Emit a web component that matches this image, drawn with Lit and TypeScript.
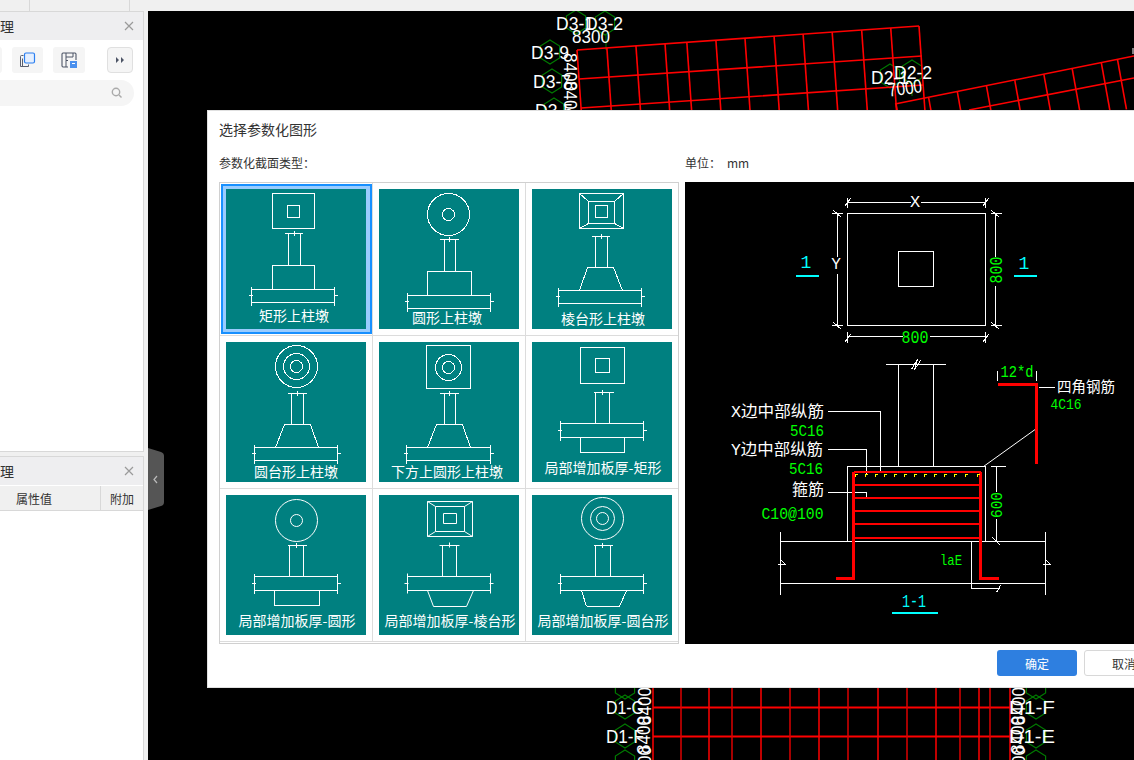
import { LitElement, html, svg, css } from "lit";
import { customElement } from "lit/decorators.js";

const R = (a: number, b: number, c: number, d: number) => `M${a} ${b}H${c}V${d}H${a}Z`;
const L = (...p: number[]) => {
  let s = "";
  for (let i = 0; i < p.length; i += 2) s += `${i ? "L" : "M"}${p[i]} ${p[i + 1]}`;
  return s;
};
const col = (a: number, b: number, y1: number, y2: number, l: number, r: number) =>
  L(l, y1, r, y1) + L(a, y1, a, y2) + L(b, y1, b, y2) + L((a + b) >> 1, y1 - 3, (a + b) >> 1, y1 + 2);
const slab = (a: number, b: number, y1: number, y2: number) => {
  const m = (y1 + y2) >> 1;
  return (
    L(a, y1, b, y1) + L(a, y2, b, y2) + L(a, y1 - 3, a, y2 + 3) + L(b, y1 - 3, b, y2 + 3) +
    L(a - 3, m, a + 1, m) + L(b - 1, m, b + 3, m)
  );
};
const trap = (a: number, b: number, y1: number, c: number, d: number, y2: number) =>
  L(a, y1, b, y1) + L(a, y1, c, y2) + L(b, y1, d, y2) + L(c, y2, d, y2);
const diag = (o: number[], m: number[]) =>
  L(o[0], o[1], m[0], m[1]) + L(o[2], o[1], m[2], m[1]) + L(o[0], o[3], m[0], m[3]) + L(o[2], o[3], m[2], m[3]);

interface Tile {
  name: string; d: string; c: number[][]; tx: number; ty: number; smooth?: boolean; selected?: boolean;
}
const TILES: Tile[] = [
  { name: "矩形上柱墩", selected: true, tx: 68, ty: 127, c: [],
    d: R(46, 4, 88, 39) + R(61, 16, 73, 28) + col(62, 74, 44, 76, 58, 76) + R(46, 76, 88, 100) + slab(25, 108, 100, 113) },
  { name: "圆形上柱墩", tx: 68, ty: 129, c: [[69, 25, 21], [69, 25, 6]],
    d: col(65, 76, 50, 82, 60, 79) + R(48, 82, 92, 106) + slab(28, 111, 106, 119) },
  { name: "棱台形上柱墩", tx: 71, ty: 130, c: [],
    d: R(47, 4, 91, 39) + R(56, 12, 82, 34) + R(63, 16, 75, 28) + diag([47, 4, 91, 39], [56, 12, 82, 34]) +
      col(63, 75, 47, 78, 59, 77) + trap(55, 81, 78, 47, 90, 101) + slab(26, 109, 101, 114) },
  { name: "圆台形上柱墩", tx: 70, ty: 130, c: [[70, 24, 21], [70, 24, 13], [70, 24, 6]],
    d: col(65, 77, 51, 82, 61, 80) + trap(58, 84, 82, 49, 92, 105) + slab(28, 111, 105, 118) },
  { name: "下方上圆形上柱墩", tx: 68, ty: 130, c: [[69, 25, 13], [69, 25, 6]],
    d: R(47, 3, 91, 46) + col(65, 76, 51, 82, 60, 79) + trap(57, 83, 82, 48, 91, 105) + slab(27, 111, 105, 118) },
  { name: "局部增加板厚-矩形", tx: 71, ty: 126, c: [],
    d: R(48, 5, 92, 41) + R(63, 16, 77, 30) + col(63, 77, 50, 81, 61, 81) + slab(28, 111, 81, 95) + R(48, 95, 92, 110) },
  { name: "局部增加板厚-圆形", tx: 71, ty: 126, smooth: true, c: [[70, 25, 21], [70, 25, 6]],
    d: col(63, 77, 50, 81, 61, 80) + slab(28, 111, 81, 95) + R(48, 95, 93, 110) },
  { name: "局部增加板厚-棱台形", tx: 71, ty: 126, smooth: true, c: [],
    d: R(48, 6, 93, 41) + R(56, 11, 85, 36) + R(64, 18, 77, 28) + diag([48, 6, 93, 41], [56, 11, 85, 36]) +
      col(63, 77, 50, 81, 60, 80) + slab(28, 111, 81, 95) + trap(48, 94, 95, 54, 87, 111) },
  { name: "局部增加板厚-圆台形", tx: 71, ty: 126, smooth: true, c: [[70, 23, 21], [70, 23, 12], [70, 23, 6]],
    d: col(63, 78, 50, 81, 61, 80) + slab(28, 111, 81, 95) + trap(49, 94, 95, 54, 87, 111) },
];

const tileSvg = (t: Tile) => html`<svg class="tile" width="140" height="140" viewBox="0 0 140 140">
  <g transform="translate(.5 .5)" fill="none" stroke="#fff" stroke-width="1">
    <path d=${t.d} shape-rendering=${t.smooth && t.name.includes("棱") ? "auto" : "crispEdges"}></path>
    ${t.c.map((c) => svg`<circle cx=${c[0]} cy=${c[1]} r=${c[2]} shape-rendering=${t.smooth ? "auto" : "crispEdges"}></circle>`)}
  </g>
  <text x=${t.tx} y=${t.ty + 5} text-anchor="middle" fill="#fff" font-size="14">${t.name}</text>
</svg>`;

/* CAD text: x,y is the centre of the run */
const cad = (x: number, y: number, s: string, fill: string, size: number, len?: number, rot = 0) => svg`<text
  transform="translate(${x} ${y}) rotate(${rot})" text-anchor="middle" dominant-baseline="central" fill=${fill}
  font-size=${size} textLength=${len ?? ""} lengthAdjust="spacingAndGlyphs">${s}</text>`;

const G = "#00ff00", W = "#ffffff", C = "#00ffff";
const tick = (x: number, y: number) => L(x - 3, y + 4, x + 3, y - 4);
const rebarY = [471, 484, 497, 510, 523, 537];
const dots = [855, 865, 875, 884, 894, 904, 914, 924, 934, 944, 954, 965, 977];

const whitePath =
  L(847, 197, 847, 207) + L(985, 197, 985, 207) + L(847, 202, 910, 202) + L(920, 202, 985, 202) + tick(847, 202) + tick(985, 202) +
  R(847, 213, 985, 325) + R(898, 251, 933, 286) +
  L(831, 213, 842, 213) + L(831, 325, 842, 325) + L(837, 213, 837, 256) + L(837, 273, 837, 325) +
  "M833 210L841 217M833 322L841 329" +
  L(990, 213, 1001, 213) + L(990, 325, 1001, 325) + L(995, 213, 995, 256) + L(995, 285, 995, 325) +
  "M991 210L999 217M991 322L999 329" +
  L(847, 331, 847, 342) + L(985, 331, 985, 342) + L(847, 336, 902, 336) + L(929, 336, 985, 336) + tick(847, 338) + tick(985, 338) +
  /* section */
  L(885, 364, 945, 364) + L(898, 364, 898, 466) + L(933, 364, 933, 466) +
  "M911 369L917 359L914 369L920 360" +
  R(847, 466, 985, 541) + L(780, 541, 1045, 541) + L(780, 583, 1045, 583) + L(780, 531, 780, 594) + L(1045, 531, 1045, 594) +
  "M777 564H785L781 560M1042 564H1050L1046 560" +
  L(827, 411, 880, 411) + L(880, 411, 880, 472) + L(827, 449, 866, 449) + L(866, 449, 866, 473) +
  L(827, 492, 866, 492) + L(866, 492, 866, 497) + L(1038, 387, 1054, 387) +
  L(990, 466, 1005, 466) + L(996, 466, 996, 491) + L(996, 518, 996, 541) + "M992 537L1000 545" +
  L(971, 540, 971, 588) + L(971, 588, 999, 588) + "M996 592L1000 585";

const Drawing = () => html`<svg class="draw" width="479" height="462" viewBox="685 182 479 462">
  <rect x="685" y="182" width="479" height="462" fill="#000"></rect>
  <g transform="translate(.5 .5)" fill="none">
    <path d=${whitePath} stroke="#fff" shape-rendering="crispEdges"></path>
    <path d="M983 466L1036 428" stroke="#fff"></path>
    <path d="M997 370V380M1036 370V380" stroke="#fff" shape-rendering="crispEdges"></path>
    <path d="M795 275H818M1013 275H1036M891 612H937" stroke=${C} stroke-width="2" shape-rendering="crispEdges"></path>
    <g stroke="#ff0000" stroke-width="2" shape-rendering="crispEdges">
      ${rebarY.map((y) => svg`<path d="M853 ${y}H980"></path>`)}
    </g>
    <path d="M853 471V578H835M980 471V578H998M997 384H1036V463" stroke="#ff0000" stroke-width="2.5" shape-rendering="crispEdges"></path>
    <g stroke="#ffff00" shape-rendering="crispEdges">
      ${dots.map((x) => svg`<path d="M${x - 1} 474H${x + 2}M${x} 473V476"></path>`)}
    </g>
  </g>
  <g class="cad">
    ${cad(915, 202, "X", W, 17)} ${cad(836, 265, "Y", W, 16)}
    ${cad(915, 338, "800", G, 19, 27)} ${cad(997, 270, "800", G, 19, 27, -90)}
    ${cad(806, 263, "1", C, 18)} ${cad(1024, 264, "1", C, 18)}
    ${cad(777.5, 413, "X边中部纵筋", W, 16, 93)} ${cad(807, 431, "5C16", G, 17, 34)}
    ${cad(777, 451, "Y边中部纵筋", W, 16, 92)} ${cad(806, 469, "5C16", G, 17, 34)}
    ${cad(808, 491, "箍筋", W, 16, 32)} ${cad(792.5, 514, "C10@100", G, 17, 62)}
    ${cad(1086, 388, "四角钢筋", W, 15, 58)} ${cad(1066, 405, "4C16", G, 15, 31)}
    ${cad(1017, 373, "12*d", G, 16, 33)} ${cad(997, 505, "600", G, 17, 26, -90)}
    ${cad(951, 561, "laE", G, 15, 22)} ${cad(914, 602, "1-1", C, 18, 24)}
  </g>
</svg>`;

/* background plan */
const lerp = (a: number, b: number, t: number) => a + (b - a) * t;
const gridCols = [0, 74, 146, 218, 272, 344, 416, 488, 560, 632, 705, 777, 847].map((v) => v / 847);
const rightCols = [660, 731, 803, 873, 945, 1015, 1087, 1127];
const botX = [653, 681, 709, 732, 761, 790, 819, 848, 878, 907, 936, 960, 979, 990, 1010];
const hex = (x: number, y: number, r = 12) => {
  const pts = [0, 60, 120, 180, 240, 300].map((a) => {
    const t = ((a - 90) * Math.PI) / 180;
    return `${(x + r * 0.92 * Math.cos(t)).toFixed(1)},${(y + r * Math.sin(t)).toFixed(1)}`;
  });
  return svg`<polygon points=${pts.join(" ")} fill="none" stroke="#007a00" stroke-width="1.2"></polygon>`;
};
const label = (x: number, y: number, s: string, len: number, rot = 0) => svg`<text transform="translate(${x} ${y}) rotate(${rot})"
  text-anchor="middle" dominant-baseline="central" fill="#fff" font-size="19" textLength=${len} lengthAdjust="spacingAndGlyphs">${s}</text>`;

const Plan = () => html`<svg class="plan" width="986" height="749" viewBox="148 11 986 749">
  ${[[576, 22], [605, 23], [550, 52], [552, 81], [554, 110], [890, 76], [912, 72]].map((p) => hex(p[0], p[1]))}
  ${[687, 707, 736, 762].flatMap((y) => [hex(625, y), hex(1036, y)])}
  <path d="M606 35V50M912 84V96" stroke="#007a00"></path>
  <path d="M1133 48V54" stroke="#fff"></path>
  <g stroke="#ff0000" stroke-width="1.6" fill="none">
    <path d="M577 50L919 26M579 79L922 56M581 108L923 85"></path>
    ${gridCols.map((t) => {
      const x = lerp(577, 919, t), y = lerp(50, 26, t);
      return svg`<path d="M${x} ${y}L${x + 7} ${y + 100}"></path>`;
    })}
    <path d="M895 104L1134 56M969 110L1134 78M896 104L900 125"></path>
    ${rightCols.map((v) => {
      const x = 500 + (v + 400) / 2.473, y = lerp(94, 56, (x - 947) / 187);
      return svg`<path d="M${x} ${y}L${x + 9} ${y + 50}"></path>`;
    })}
  </g>
  <g stroke="#ff0000" fill="none">
    <path d="M653 707.5H1010M653 736.5H1010" stroke-width="2"></path>
    ${botX.map((x, i) => svg`<path d="M${x} 688V760" stroke-width="1.5" stroke=${i % 2 ? "#dd0000" : "#ff0000"}></path>`)}
  </g>
  <g class="plan-text">
    ${label(575, 23, "D3-1", 38)} ${label(604, 23, "D3-2", 38)} ${label(591, 36, "8300", 38)}
    ${label(550, 52, "D3-9", 38)} ${label(552, 81, "D3-7", 38)} ${label(554, 110, "D3-5", 38)}
    ${label(570, 72, "8400", 38, 90)} ${label(570, 100, "8400", 38, 90)}
    ${label(890, 77, "D2-1", 38)} ${label(913, 72, "D2-2", 38)} ${label(905, 88, "7000", 34, -8)}
    ${label(625, 707, "D1-G", 38)} ${label(625, 736, "D1-F", 38)}
    ${label(1032, 707, "D1-F", 46)} ${label(1032, 736, "D1-E", 46)}
    ${label(644, 706, "8400", 38, -90)} ${label(643, 735, "8400", 38, -90)} ${label(644, 765, "8400", 38, -90)}
    ${label(1018, 706, "8400", 38, -90)} ${label(1017, 735, "8400", 38, -90)} ${label(1018, 765, "8400", 38, -90)}
  </g>
</svg>`;

@customElement("app-root")
export class AppRoot extends LitElement {
  static styles = css`
    :host {
      display: grid;
      grid-template-columns: 144px 4px 1fr;
      grid-template-rows: 11px 1fr;
      width: 1134px;
      height: 760px;
      overflow: hidden;
      background: #f0f0f0;
      font-family: "Noto Sans CJK SC", "Liberation Sans", sans-serif;
      color: #333;
    }
    .tabs { grid-column: 1 / -1; display: flex; background: #f0f0f0; }
    .tabs i { display: block; border-right: 1px solid #d8d8d8; box-sizing: border-box; }
    .tabs i:nth-child(1) { width: 30px; }
    .tabs i:nth-child(2) { width: 100px; }
    .side { display: flex; flex-direction: column; gap: 4px; min-height: 0; }
    .panel { background: #fff; border: 1px solid #d8d8d8; border-left: 0; border-bottom: 0; overflow: hidden; display: flex; flex-direction: column; }
    .panel.one { height: 441px; flex: none; border-bottom: 1px solid #d8d8d8; box-sizing: border-box; }
    .panel.two { flex: 1; }
    .ph { height: 29px; flex: none; background: #eeeef0; display: flex; align-items: center; justify-content: space-between; font-size: 14px; padding-right: 8px; border-bottom: 1px solid #fff; box-sizing: border-box; }
    .ph span { margin-left: -14px; }
    .ph svg { display: block; }
    .tools { display: flex; gap: 10px; margin: 6px 10px 0 -29px; height: 26px; }
    .tb { width: 31px; background: #f5f5f5; border-radius: 3px; display: flex; align-items: center; justify-content: center; }
    .tb:nth-child(3) { width: 32px; }
    .tb.more { width: 26px; margin-left: auto; box-sizing: border-box; border: 1px solid #e0e0e0; border-radius: 4px; }
    .search { height: 26px; margin: 7px 9px 0 -20px; background: #f5f5f5; border-radius: 13px; display: flex; align-items: center; justify-content: flex-end; padding-right: 11px; }
    .thead { height: 25px; flex: none; display: grid; grid-template-columns: 101px 1fr; background: #f0f0f0; border-bottom: 1px solid #d8d8d8; box-sizing: border-box; font-size: 12px; }
    .thead div { display: flex; align-items: center; justify-content: center; }
    .thead div:first-child { border-right: 1px solid #d8d8d8; justify-content: flex-start; padding-left: 16px; }
    .canvas { position: relative; background: #000; overflow: hidden; grid-column: 2 / -1; margin-left: 4px; }
    .plan { display: block; font-family: "Liberation Sans", sans-serif; }
    .handle { position: absolute; left: 0; top: 437px; display: block; }
    .dialog { position: absolute; left: 59px; top: 99px; width: 969px; background: #fff; box-shadow: inset 0 0 0 1px #e0e0e0; box-sizing: border-box; padding: 0 12px 12px; }
    .title { height: 40px; padding-bottom: 2px; box-sizing: border-box; display: flex; align-items: center; font-size: 14px; }
    .labels { height: 26px; padding-bottom: 2px; box-sizing: border-box; margin-bottom: 6px; display: flex; align-items: center; font-size: 12px; }
    .labels .a { width: 466px; }
    .labels .u { width: 42px; }
    .body { display: flex; gap: 6px; }
    .grid { display: grid; grid-template-columns: 153px 153px 152px; grid-template-rows: repeat(3, 153px); border: 1px solid #d0d0d0; flex: none; }
    .cell { padding: 6px; box-sizing: border-box; border-right: 1px solid #dcdcdc; border-bottom: 1px solid #dcdcdc; display: flex; }
    .cell:nth-child(3n) { border-right: 0; }
    .wrap { display: flex; }
    .wrap.sel { background: #99ccff; border: 2px solid #1890ff; padding: 3px 4px 3px 3px; margin: -5px -6px -5px -5px; }
    .tile { display: block; background: #008080; font-family: "Noto Sans CJK SC", sans-serif; }
    .draw { display: block; flex: none; font-family: "Liberation Mono", "Noto Sans CJK SC", monospace; }
    .foot { display: flex; justify-content: flex-end; gap: 7px; padding-top: 6px; }
    .btn { width: 80px; height: 26px; box-sizing: border-box; border-radius: 3px; font-size: 12px; display: flex; align-items: center; justify-content: center; }
    .btn.ok { background: #2e7fe0; color: #fff; }
    .btn.no { background: #fff; border: 1px solid #d8d8d8; color: #333; }
  `;

  render() {
    const x = html`<svg width="12" height="12" viewBox="0 0 12 12"><path d="M2 2L10 10M10 2L2 10" stroke="#9a9a9a" stroke-width="1.2"></path></svg>`;
    return html`
      <div class="tabs"><i></i><i></i></div>
      <div class="side">
        <div class="panel one">
          <div class="ph"><span>管理</span>${x}</div>
          <div class="tools">
            <div class="tb"></div>
            <div class="tb">
              <svg width="17" height="16" viewBox="0 0 17 16" fill="none">
                <path d="M4.5 3.5H2.5A1 1 0 0 0 1.5 4.5V14.5H9.5V12.5" stroke="#5a6070" stroke-width="1"></path>
                <path d="M3.5 14V6.5" stroke="#5a6070"></path>
                <rect x="5.5" y="1" width="10" height="10" rx="1.5" fill="#e4efff" stroke="#2a7ff0" stroke-width="1.2"></rect>
              </svg>
            </div>
            <div class="tb">
              <svg width="16" height="16" viewBox="0 0 16 16" fill="none">
                <path d="M7 15H2A1.2 1.2 0 0 1 1 14V2A1.2 1.2 0 0 1 2 1H14A1.2 1.2 0 0 1 15 2V8" stroke="#4d5566" stroke-width="1.1"></path>
                <path d="M5 1V8.5H7M5 5H12V1M5 8.5V15" stroke="#4d5566"></path>
                <rect x="9" y="9" width="7" height="7" fill="#4a90ee"></rect>
                <path d="M11 11.5H14" stroke="#fff"></path>
              </svg>
            </div>
            <div class="tb more">
              <svg width="10" height="8" viewBox="0 0 10 8"><path d="M1 1L4 4L1 7ZM6 1L9 4L6 7Z" fill="#4d5566"></path></svg>
            </div>
          </div>
          <div class="search">
            <svg width="12" height="12" viewBox="0 0 12 12" fill="none"><circle cx="5" cy="5" r="3.7" stroke="#aaa" stroke-width="1.4"></circle><path d="M8 8L10.5 10.5" stroke="#aaa" stroke-width="1.4"></path></svg>
          </div>
        </div>
        <div class="panel two">
          <div class="ph"><span>管理</span>${x}</div>
          <div class="thead"><div>属性值</div><div>附加</div></div>
        </div>
      </div>
      <div class="canvas">
        ${Plan()}
        <svg class="handle" width="16" height="63" viewBox="0 0 16 63">
          <path d="M0 0L13 4Q16 5 16 8V54Q16 57 13 58L0 62Z" fill="#555"></path>
          <path d="M9 28L6 31.5L9 35" fill="none" stroke="#bbb" stroke-width="1.2"></path>
        </svg>
        <div class="dialog">
          <div class="title">选择参数化图形</div>
          <div class="labels"><span class="a">参数化截面类型：</span><span class="u">单位：</span><span>mm</span></div>
          <div class="body">
            <div class="grid">
              ${TILES.map((t) => html`<div class="cell"><div class="wrap ${t.selected ? "sel" : ""}">${tileSvg(t)}</div></div>`)}
            </div>
            ${Drawing()}
          </div>
          <div class="foot"><div class="btn ok">确定</div><div class="btn no">取消</div></div>
        </div>
      </div>
    `;
  }
}
